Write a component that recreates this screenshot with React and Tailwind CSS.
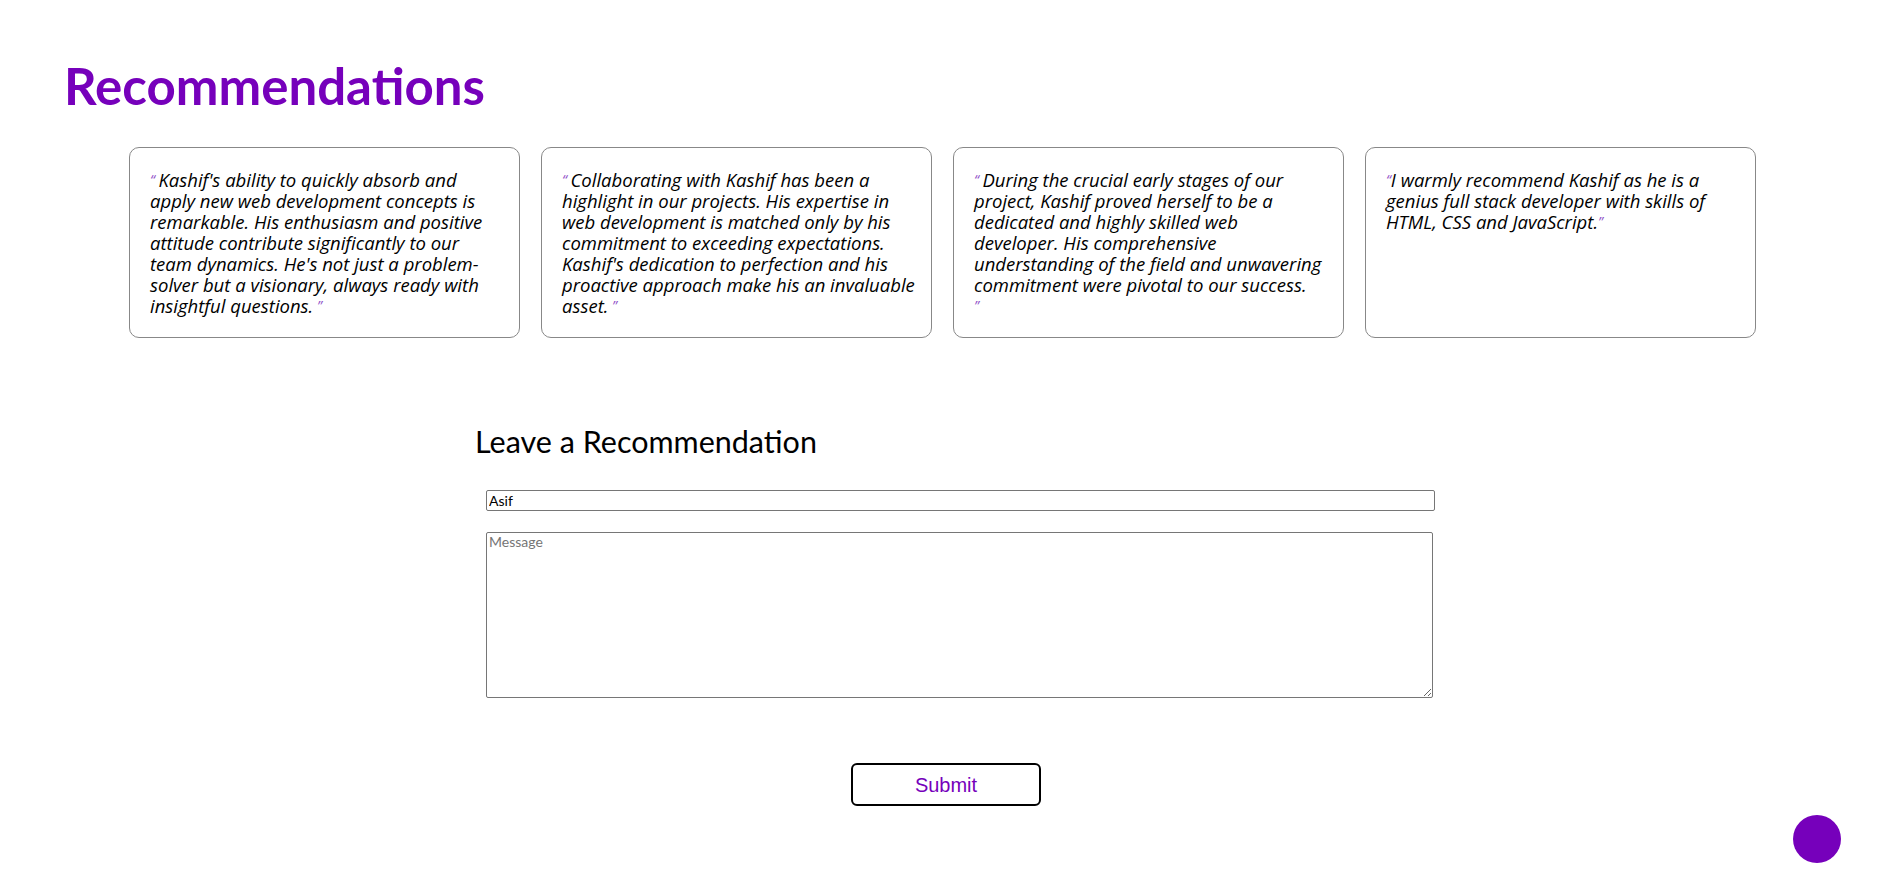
import { useState } from "react";

// lines kept as they break in the design
const recs = [
  {
    open: "“ ",
    close: " ”",
    lines: [
      "Kashif's ability to quickly absorb and",
      "apply new web development concepts is",
      "remarkable. His enthusiasm and positive",
      "attitude contribute significantly to our",
      "team dynamics. He's not just a problem-",
      "solver but a visionary, always ready with",
      "insightful questions.",
    ],
  },
  {
    open: "“ ",
    close: " ”",
    lines: [
      "Collaborating with Kashif has been a",
      "highlight in our projects. His expertise in",
      "web development is matched only by his",
      "commitment to exceeding expectations.",
      "Kashif's dedication to perfection and his",
      "proactive approach make his an invaluable",
      "asset.",
    ],
  },
  {
    open: "“ ",
    close: "”",
    lines: [
      "During the crucial early stages of our",
      "project, Kashif proved herself to be a",
      "dedicated and highly skilled web",
      "developer. His comprehensive",
      "understanding of the field and unwavering",
      "commitment were pivotal to our success.",
      "",
    ],
  },
  {
    open: "“",
    close: "”",
    lines: [
      "I warmly recommend Kashif as he is a",
      "genius full stack developer with skills of",
      "HTML, CSS and JavaScript.",
    ],
  },
];

function Quote({ children }) {
  return <span className="text-[14px] align-top text-[#9050c8]">{children}</span>;
}

export default function App() {
  const [name, setName] = useState("Asif");
  const [message, setMessage] = useState("");

  return (
    <div className="min-h-screen bg-white text-black font-['Lato',sans-serif]">
      <h1 className="pt-[58px] pl-[64px] text-[51px] leading-[56px] font-bold text-[#7600bb]">
        Recommendations
      </h1>

      <div className="mt-[33px] ml-[129px] flex gap-[21px]">
        {recs.map((rec, i) => (
          <div
            key={i}
            className="w-[391px] border border-[#888] rounded-[10px] pt-[21px] pb-[21px] px-[20px]"
          >
            <p className="italic text-[18.5px] leading-[21px] font-['Open_Sans',sans-serif]">
              {rec.lines.map((line, j) => (
                <span key={j} className="block whitespace-nowrap">
                  {j === 0 && <Quote>{rec.open}</Quote>}
                  {line}
                  {j === rec.lines.length - 1 && <Quote>{rec.close}</Quote>}
                </span>
              ))}
            </p>
          </div>
        ))}
      </div>

      <div className="mt-[85px] ml-[475px] w-[960px]">
        <h2 className="text-[30.5px] leading-[36px]">Leave a Recommendation</h2>
        <form onSubmit={(e) => e.preventDefault()}>
          <input
            value={name}
            onChange={(e) => setName(e.target.value)}
            className="block mt-[31px] ml-[11px] w-[949px] h-[21px] border border-[#767676] rounded-[2px] px-[2px] text-[14px]"
          />
          <textarea
            value={message}
            onChange={(e) => setMessage(e.target.value)}
            placeholder="Message"
            className="block mt-[21px] ml-[11px] w-[947px] h-[166px] border border-[#767676] rounded-[2px] px-[2px] text-[14px] leading-[18px] placeholder:text-[#757575]"
          />
        </form>
      </div>

      <div className="flex justify-center mt-[65px]">
        <button className="w-[190px] h-[43px] border-2 border-black rounded-[6px] bg-white text-[#7600bb] text-[20px] font-['Liberation_Sans',Arial,sans-serif]">
          Submit
        </button>
      </div>

      <button className="fixed right-[51px] bottom-[23px] w-[48px] h-[48px] rounded-full bg-[#7600bb]" />
    </div>
  );
}
